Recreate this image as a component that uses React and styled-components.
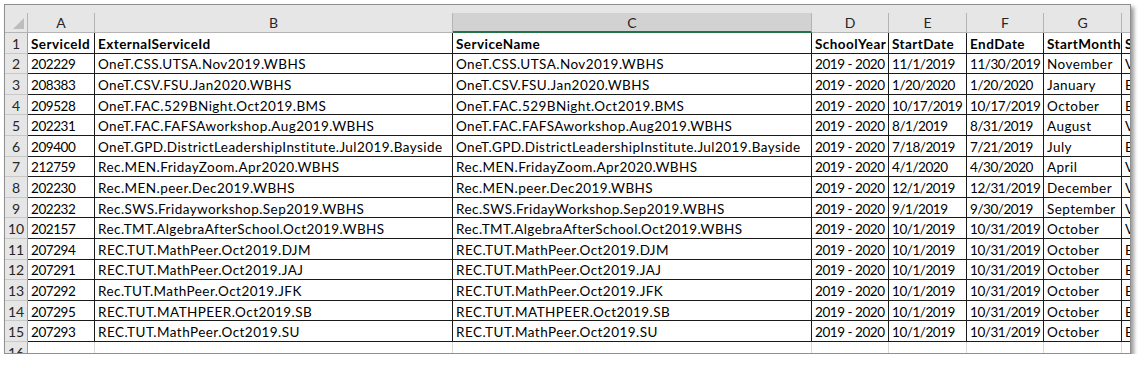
import React from 'react'
import styled, { createGlobalStyle } from 'styled-components'

const GlobalStyle = createGlobalStyle`
  html, body {
    margin: 0;
    padding: 0;
    background: #ffffff;
  }
`

const COLS = '23px 67px 358px 359px 77px 78px 77px 78px 80px'

// columns holding numbers / dates get tighter spacing
const NUM_COLS = [0, 3, 4, 5]

const Page = styled.div`
  padding: 4px 0 0 4px;
  font-family: Lato, "Open Sans", sans-serif;
`

const Frame = styled.div`
  width: 1127px;
  height: 350px;
  box-sizing: border-box;
  border: 1px solid #8f8f8f;
  box-shadow: 3px 3px 4px rgba(0, 0, 0, 0.4);
  overflow: hidden;
  background: #ffffff;
`

const TopStrip = styled.div`
  height: 8px;
  background: #e6e6e6;
`

const Row = styled.div`
  display: grid;
  grid-template-columns: ${COLS};
  height: ${p => (p.$head ? '20px' : '20.6px')};
`

const HeadCell = styled.div`
  box-sizing: border-box;
  background: ${p => (p.$selected ? '#d2d2d2' : '#e6e6e6')};
  border-right: 1px solid #b4b4b4;
  border-bottom: ${p => (p.$selected ? '2px solid #217346' : '1px solid #b4b4b4')};
  color: #262626;
  font-size: 14px;
  display: flex;
  align-items: center;
  justify-content: center;
  position: relative;
`

const Corner = styled.div`
  position: absolute;
  right: 3px;
  bottom: 3px;
  width: 0;
  height: 0;
  border-left: 11px solid transparent;
  border-bottom: 11px solid #bdbdbd;
`

const NumCell = styled.div`
  box-sizing: border-box;
  background: #e6e6e6;
  border-right: 1px solid #9e9e9e;
  border-bottom: 1px solid #c8c8c8;
  color: #262626;
  font-size: 14px;
  display: flex;
  align-items: center;
  justify-content: center;
  padding-top: 1px;
`

const Cell = styled.div`
  box-sizing: border-box;
  border-right: 1px solid ${p => (p.$empty ? '#d9d9d9' : '#1a1a1a')};
  border-bottom: 1px solid ${p => (p.$empty ? '#d9d9d9' : '#1a1a1a')};
  font-size: 13.5px;
  font-weight: ${p => (p.$bold ? 700 : 400)};
  letter-spacing: ${p => (p.$num ? '-0.45px' : '0.45px')};
  color: #000000;
  padding: 2px 0 0 3px;
  white-space: nowrap;
  overflow: hidden;
  display: flex;
  align-items: center;
`

const letters = ['A', 'B', 'C', 'D', 'E', 'F', 'G', 'H']

const header = ['ServiceId', 'ExternalServiceId', 'ServiceName', 'SchoolYear', 'StartDate', 'EndDate', 'StartMonth', 'S']

const SY = '2019 - 2020'

const data = [
  ['202229', 'OneT.CSS.UTSA.Nov2019.WBHS', 'OneT.CSS.UTSA.Nov2019.WBHS', SY, '11/1/2019', '11/30/2019', 'November', 'V'],
  ['208383', 'OneT.CSV.FSU.Jan2020.WBHS', 'OneT.CSV.FSU.Jan2020.WBHS', SY, '1/20/2020', '1/20/2020', 'January', 'B'],
  ['209528', 'OneT.FAC.529BNight.Oct2019.BMS', 'OneT.FAC.529BNight.Oct2019.BMS', SY, '10/17/2019', '10/17/2019', 'October', 'B'],
  ['202231', 'OneT.FAC.FAFSAworkshop.Aug2019.WBHS', 'OneT.FAC.FAFSAworkshop.Aug2019.WBHS', SY, '8/1/2019', '8/31/2019', 'August', 'V'],
  ['209400', 'OneT.GPD.DistrictLeadershipInstitute.Jul2019.Bayside', 'OneT.GPD.DistrictLeadershipInstitute.Jul2019.Bayside', SY, '7/18/2019', '7/21/2019', 'July', 'B'],
  ['212759', 'Rec.MEN.FridayZoom.Apr2020.WBHS', 'Rec.MEN.FridayZoom.Apr2020.WBHS', SY, '4/1/2020', '4/30/2020', 'April', 'V'],
  ['202230', 'Rec.MEN.peer.Dec2019.WBHS', 'Rec.MEN.peer.Dec2019.WBHS', SY, '12/1/2019', '12/31/2019', 'December', 'V'],
  ['202232', 'Rec.SWS.Fridayworkshop.Sep2019.WBHS', 'Rec.SWS.FridayWorkshop.Sep2019.WBHS', SY, '9/1/2019', '9/30/2019', 'September', 'V'],
  ['202157', 'Rec.TMT.AlgebraAfterSchool.Oct2019.WBHS', 'Rec.TMT.AlgebraAfterSchool.Oct2019.WBHS', SY, '10/1/2019', '10/31/2019', 'October', 'V'],
  ['207294', 'REC.TUT.MathPeer.Oct2019.DJM', 'REC.TUT.MathPeer.Oct2019.DJM', SY, '10/1/2019', '10/31/2019', 'October', 'B'],
  ['207291', 'REC.TUT.MathPeer.Oct2019.JAJ', 'REC.TUT.MathPeer.Oct2019.JAJ', SY, '10/1/2019', '10/31/2019', 'October', 'B'],
  ['207292', 'Rec.TUT.MathPeer.Oct2019.JFK', 'REC.TUT.MathPeer.Oct2019.JFK', SY, '10/1/2019', '10/31/2019', 'October', 'B'],
  ['207295', 'REC.TUT.MATHPEER.Oct2019.SB', 'REC.TUT.MATHPEER.Oct2019.SB', SY, '10/1/2019', '10/31/2019', 'October', 'B'],
  ['207293', 'REC.TUT.MathPeer.Oct2019.SU', 'REC.TUT.MathPeer.Oct2019.SU', SY, '10/1/2019', '10/31/2019', 'October', 'B'],
]

const App = () => {
  return (
    <Page>
      <GlobalStyle />
      <Frame>
        <TopStrip />
        <Row $head>
          <HeadCell>
            <Corner />
          </HeadCell>
          {letters.map(l => (
            <HeadCell key={l} $selected={l === 'C'}>{l}</HeadCell>
          ))}
        </Row>

        <Row>
          <NumCell>1</NumCell>
          {header.map((h, i) => (
            <Cell key={i} $bold>{h}</Cell>
          ))}
        </Row>

        {data.map((r, i) => (
          <Row key={i}>
            <NumCell>{i + 2}</NumCell>
            {r.map((v, j) => (
              <Cell key={j} $num={NUM_COLS.includes(j)}>{v}</Cell>
            ))}
          </Row>
        ))}

        <Row>
          <NumCell>16</NumCell>
          {letters.map(l => (
            <Cell key={l} $empty />
          ))}
        </Row>
      </Frame>
    </Page>
  )
}

export default App
